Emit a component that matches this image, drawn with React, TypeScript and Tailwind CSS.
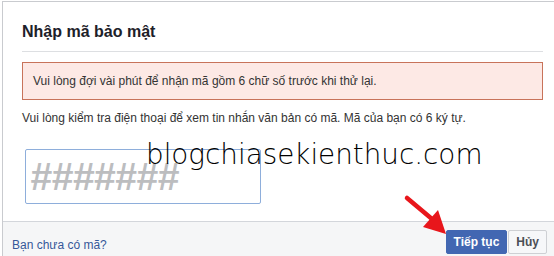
import React from "react";

export default function App() {
  return (
    <div
      className="relative w-[554px] h-[256px] overflow-hidden bg-white"
      style={{ fontFamily: '"Liberation Sans", Arial, sans-serif' }}
    >
      <div className="ml-[2px] mt-[1px] w-[560px] border-t border-l border-[#c9cbcf] bg-white">
        {/* Header */}
        <div className="mx-[19px] pt-[20px] pb-[9px] border-b border-[#dddfe2]">
          <div className="text-[16px] leading-[20px] font-bold text-[#1d2129]">Nhập mã bảo mật</div>
        </div>
        {/* Body */}
        <div className="px-[19px] pt-[10px] pb-[17px]">
          <div className="border border-[#c8735a] bg-[#fde9e5] px-[10px] py-[11px] text-[12px] leading-[14px] text-[#333]">
            Vui lòng đợi vài phút để nhận mã gồm 6 chữ số trước khi thử lại.
          </div>
          <div className="mt-[10px] text-[12px] leading-[16px] text-[#333]">
            Vui lòng kiểm tra điện thoại để xem tin nhắn văn bản có mã. Mã của bạn có 6 ký tự.
          </div>
          <div className="mt-[23px] ml-[3px] w-[236px] h-[55px] border border-[#8eaedb] rounded-[2px] flex items-center pl-[4px]">
            <span className="text-[39px] leading-none font-bold italic tracking-[-0.5px] text-[#bcbdbf]">#######</span>
          </div>
        </div>
        {/* Footer */}
        <div className="h-[40px] border-t border-[#d3d6db] bg-[#f5f6f7] flex items-start pt-[8px] pl-[9px] pr-[10px]">
          <div className="w-[535px] flex items-center justify-between">
            <span className="text-[12px] leading-[16px] text-[#365899] mt-[5px]">Bạn chưa có mã?</span>
            <div className="flex items-center gap-[1px]">
              <button className="h-[24px] px-[7px] bg-[#4267b2] border border-[#4267b2] rounded-[2px] text-white text-[12px] font-bold leading-[22px]">
                Tiếp tục
              </button>
              <button className="h-[24px] px-[7px] bg-[#f6f7f9] border border-[#ced0d4] rounded-[2px] text-[#4b4f56] text-[12px] font-bold leading-[22px]">
                Hủy
              </button>
            </div>
          </div>
        </div>
      </div>

      {/* Watermark */}
      <div
        className="absolute left-[146px] top-[139px] text-[27.8px] leading-[32px] text-black"
        style={{ fontFamily: '"DejaVu Sans", sans-serif', fontWeight: 200 }}
      >
        blogchiasekienthuc.com
      </div>

      {/* Red arrow */}
      <svg className="absolute left-0 top-0" width="554" height="256" viewBox="0 0 554 256">
        <line x1="407" y1="198" x2="432" y2="219" stroke="#e8161b" strokeWidth="4.5" strokeLinecap="round" />
        <polygon points="446,234 423,227 438,210" fill="#e8161b" />
      </svg>
    </div>
  );
}
